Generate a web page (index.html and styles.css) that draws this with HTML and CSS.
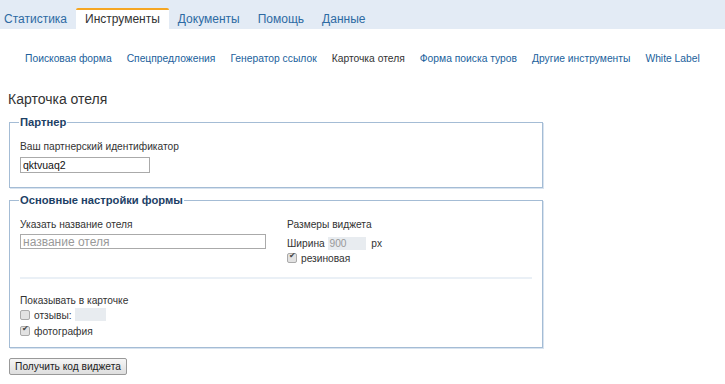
FILE: index.html
```html
<!DOCTYPE html>
<html lang="ru">
<head>
  <meta charset="UTF-8">
  <title>Карточка отеля</title>
  <link rel="stylesheet" href="styles.css">
</head>
<body>
  <!-- Main tabs -->
  <div class="top-bar">
    <a class="tab" href="#">Статистика</a>
    <a class="tab active" href="#">Инструменты</a>
    <a class="tab" href="#">Документы</a>
    <a class="tab" href="#">Помощь</a>
    <a class="tab" href="#">Данные</a>
  </div>

  <!-- Tools submenu -->
  <div class="sub-nav">
    <a href="#">Поисковая форма</a>
    <a href="#">Спецпредложения</a>
    <a href="#">Генератор ссылок</a>
    <a href="#" class="current">Карточка отеля</a>
    <a href="#">Форма поиска туров</a>
    <a href="#">Другие инструменты</a>
    <a href="#">White Label</a>
  </div>

  <div class="content">
    <h1 class="page-title">Карточка отеля</h1>

    <fieldset class="box box-partner">
      <legend>Партнер</legend>
      <div class="label">Ваш партнерский идентификатор</div>
      <input type="text" class="field field-id" value="qktvuaq2">
    </fieldset>

    <fieldset class="box box-settings">
      <legend>Основные настройки формы</legend>
      <div class="row">
        <div class="col-left">
          <div class="label">Указать название отеля</div>
          <input type="text" class="field field-name" placeholder="название отеля">
        </div>
        <div class="col-right">
          <div class="label">Размеры виджета</div>
          <div class="line">Ширина <span class="grey-input grey-width">900</span> px</div>
          <label class="check"><span class="box-check checked"></span>резиновая</label>
        </div>
      </div>
      <div class="divider"></div>
      <div class="label">Показывать в карточке</div>
      <label class="check"><span class="box-check"></span>отзывы: <span class="grey-input grey-reviews"></span></label>
      <label class="check"><span class="box-check checked"></span>фотография</label>
    </fieldset>

    <button class="get-code">Получить код виджета</button>
  </div>
</body>
</html>
```

FILE: styles.css
```css
body {
  margin: 0;
  font-family: 'Liberation Sans', Arial, sans-serif;
  font-size: 10.2px;
  color: #333;
  background: #fff;
}
a {
  text-decoration: none;
}
/* Main tabs */
.top-bar {
  display: flex;
  align-items: flex-end;
  height: 29px;
  background: #e3ebf5;
}
.tab {
  display: block;
  height: 19px;
  line-height: 19px;
  padding: 0 9px;
  font-size: 12px;
  color: #2d6aa3;
  border-top: 2px solid transparent;
  white-space: nowrap;
}
.tab:first-child {
  padding-left: 4px;
}
.tab.active {
  background: #fff;
  color: #333;
  border-top-color: #f5a623;
  border-radius: 2px 2px 0 0;
}
/* Submenu */
.sub-nav {
  display: flex;
  gap: 15px;
  padding: 23px 0 0 25px;
  height: 14px;
  line-height: 14px;
  white-space: nowrap;
}
.sub-nav a {
  color: #215f9c;
  font-size: 10.3px;
}
.sub-nav a.current {
  color: #333;
}
.content {
  padding: 0 8px;
}
.page-title {
  margin: 24px 0 0;
  font-size: 14px;
  font-weight: normal;
  line-height: 18px;
  color: #333;
}
/* Fieldsets */
.box {
  width: 512px;
  margin: 0 0 0 1px;
  padding: 0 10px;
  border: 1px solid #a4bcd5;
  box-shadow: 1px 1px 0 #d8e3ef;
}
.box legend {
  padding: 0 1px;
  margin-left: -1px;
  font-size: 11.2px;
  font-weight: bold;
  color: #1d4166;
}
.box-partner {
  margin-top: 8px;
  padding-bottom: 14px;
}
.box-settings {
  margin-top: 6px;
  padding-bottom: 8px;
}
.label {
  line-height: 13px;
  color: #333;
}
.box-partner .label {
  margin-top: 12px;
}
.field {
  display: block;
  box-sizing: border-box;
  margin: 4px 0 0;
  padding: 0 2px;
  height: 16px;
  border: 1px solid #aaa;
  font-family: inherit;
  font-size: 10.5px;
  color: #111;
  outline: none;
}
.field-id {
  width: 130px;
}
.field-name {
  width: 246px;
  height: 15px;
  margin-top: 3px;
}
.field-name::placeholder {
  color: #999;
  font-size: 12px;
}
.row {
  display: flex;
  margin-top: 12px;
}
.col-left {
  width: 267px;
}
.col-right .line {
  margin-top: 6px;
  line-height: 14px;
}
.col-right .check {
  margin-top: -1px;
}
.grey-input {
  display: inline-block;
  vertical-align: middle;
  background: #e8ecf0;
  color: #999;
  line-height: 13px;
}
.grey-width {
  width: 36px;
  padding-left: 2px;
  margin: -2px 3px 0 0;
}
.grey-reviews {
  width: 31px;
  height: 13px;
  margin: -2px 0 0 3px;
}
.check {
  display: flex;
  align-items: center;
  height: 16px;
}
.box-check {
  position: relative;
  display: inline-block;
  box-sizing: border-box;
  width: 10px;
  height: 10px;
  margin-right: 4px;
  border: 1px solid #aaa;
  border-radius: 2px;
  background: #e2e2e2;
}
.box-check.checked::after {
  content: "\2714";
  position: absolute;
  left: 1px;
  top: -3px;
  font-size: 8px;
  color: #444;
}
.divider {
  height: 2px;
  margin: 11px 0 15px;
  background: #eaf0f6;
}
.box-settings > .label {
  margin-bottom: 0;
}
/* Submit button */
.get-code {
  margin: 10px 0 0 1px;
  height: 17px;
  width: 118px;
  padding: 0;
  font-family: inherit;
  font-size: 10.2px;
  color: #222;
  border: 1px solid #999;
  border-radius: 2px;
  background: linear-gradient(#f6f6f6, #dedede);
}
```
